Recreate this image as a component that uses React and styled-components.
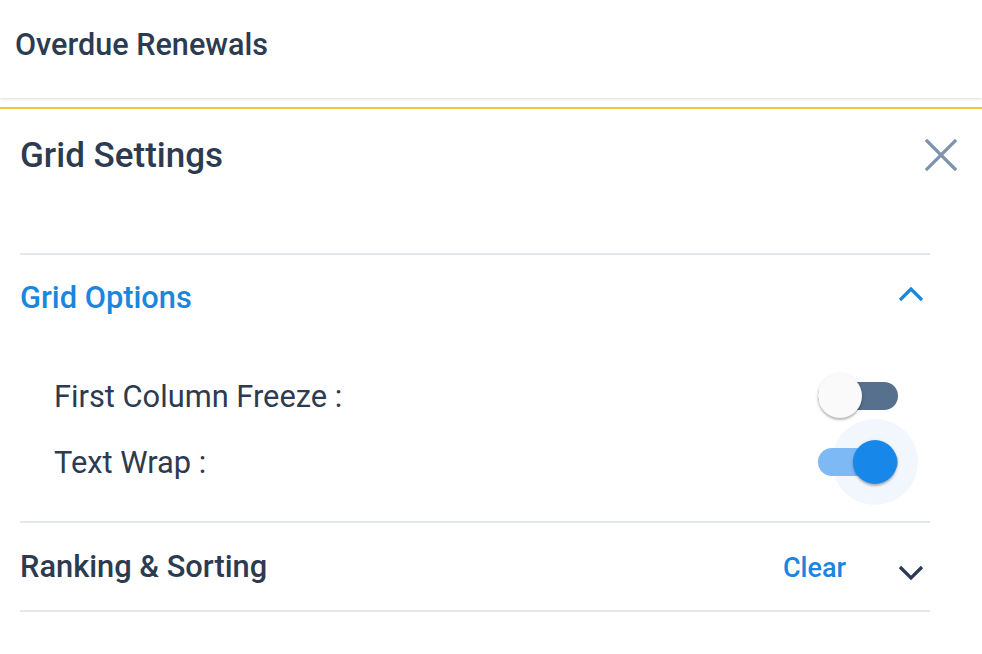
import React from "react";
import styled, { createGlobalStyle } from "styled-components";

const Global = createGlobalStyle`
  html, body { margin: 0; padding: 0; background: #fff; }
  body { font-family: Roboto, "Liberation Sans", Arial, sans-serif; color: #2c3b50; }
  * { box-sizing: border-box; }
`;

const Page = styled.div`
  width: 982px;
  height: 654px;
  overflow: hidden;
  background: #fff;
`;

const Header = styled.header`
  height: 98px;
  display: flex;
  align-items: center;
  padding: 0 0 10px 15px;
  box-shadow: 0 1px 3px rgba(0, 0, 0, 0.14);
  position: relative;
`;

const HeaderTitle = styled.h1`
  margin: 0;
  font-size: 30.6px;
  font-weight: 500;
  color: #2c3b50;
`;

const Panel = styled.section`
  margin-top: 9px;
  border-top: 2px solid #f4c63d;
`;

const TitleRow = styled.div`
  height: 144px;
  display: flex;
  align-items: flex-start;
  justify-content: space-between;
  padding: 26px 24px 0 20px;
`;

const Title = styled.h2`
  margin: 0;
  font-size: 35px;
  font-weight: 500;
  color: #2c3b50;
`;

const CloseButton = styled.button`
  border: 0;
  background: none;
  padding: 0;
  margin-top: 3px;
  width: 34px;
  height: 34px;
  display: flex;
  align-items: center;
  justify-content: center;
  cursor: pointer;
`;

const Section = styled.div`
  margin: 0 52px 0 20px;
  border-top: 2px solid #e4e8ee;
  ${(p) => p.$last && "border-bottom: 2px solid #e4e8ee;"}
`;

const SectionHead = styled.div`
  height: ${(p) => p.$h}px;
  display: flex;
  align-items: center;
  justify-content: space-between;
`;

const SectionTitle = styled.h3`
  margin: 0;
  font-size: 30.8px;
  font-weight: 500;
  color: ${(p) => (p.$active ? "#1a86de" : "#2c3b50")};
`;

const HeadRight = styled.div`
  display: flex;
  align-items: center;
  gap: 52px;
`;

const ClearLink = styled.span`
  font-size: 27px;
  font-weight: 500;
  color: #1a86de;
  margin-top: 2px;
`;

const Chevron = styled.svg`
  width: 26px;
  height: 26px;
  display: block;
  margin-right: 6px;
  margin-top: ${(p) => p.$dy || 0}px;
`;

const Options = styled.div`
  padding: 24px 32px 26px 34px;
`;

const OptionRow = styled.div`
  height: 66px;
  display: flex;
  align-items: center;
  justify-content: space-between;
`;

const OptionLabel = styled.span`
  font-size: 30.8px;
  font-weight: 400;
  color: #2c3b50;
`;

const Switch = styled.div`
  position: relative;
  width: 80px;
  height: 28px;
`;

const Track = styled.div`
  position: absolute;
  inset: 0;
  border-radius: 14px;
  background: ${(p) => (p.$on ? "#7db9f4" : "#56708e")};
`;

const Halo = styled.div`
  position: absolute;
  width: 86px;
  height: 86px;
  border-radius: 50%;
  background: #f2f7fd;
  top: 50%;
  left: 57px;
  transform: translate(-50%, -50%);
`;

const Thumb = styled.div`
  position: absolute;
  width: 44px;
  height: 44px;
  border-radius: 50%;
  top: 50%;
  left: ${(p) => (p.$on ? "35px" : "0px")};
  transform: translateY(-50%);
  background: ${(p) => (p.$on ? "#1788e9" : "#fafafa")};
  box-shadow: 0 2px 2px rgba(0, 0, 0, 0.22), 0 1px 4px rgba(0, 0, 0, 0.12);
`;

function Toggle({ on }) {
  return (
    <Switch>
      {on && <Halo />}
      <Track $on={on} />
      <Thumb $on={on} />
    </Switch>
  );
}

export default function App() {
  return (
    <Page>
      <Global />
      <Header>
        <HeaderTitle>Overdue Renewals</HeaderTitle>
      </Header>
      <Panel>
        <TitleRow>
          <Title>Grid Settings</Title>
          <CloseButton aria-label="Close">
            <svg width="32" height="32" viewBox="0 0 32 32">
              <path d="M2 2 L30 30 M30 2 L2 30" stroke="#7e94ac" strokeWidth="3.2" strokeLinecap="square" />
            </svg>
          </CloseButton>
        </TitleRow>
        <Section>
          <SectionHead $h={84}>
            <SectionTitle $active>Grid Options</SectionTitle>
            <Chevron viewBox="0 0 26 26" $dy={-4}>
              <path d="M2 18 L13 7 L24 18" fill="none" stroke="#1a86de" strokeWidth="3.2" />
            </Chevron>
          </SectionHead>
          <Options>
            <OptionRow>
              <OptionLabel>First Column Freeze :</OptionLabel>
              <Toggle on={false} />
            </OptionRow>
            <OptionRow>
              <OptionLabel>Text Wrap :</OptionLabel>
              <Toggle on />
            </OptionRow>
          </Options>
        </Section>
        <Section $last>
          <SectionHead $h={87}>
            <SectionTitle>Ranking &amp; Sorting</SectionTitle>
            <HeadRight>
              <ClearLink>Clear</ClearLink>
              <Chevron viewBox="0 0 26 26" $dy={10}>
                <path d="M2 8 L13 19 L24 8" fill="none" stroke="#2c3b50" strokeWidth="3.2" />
              </Chevron>
            </HeadRight>
          </SectionHead>
        </Section>
      </Panel>
    </Page>
  );
}
